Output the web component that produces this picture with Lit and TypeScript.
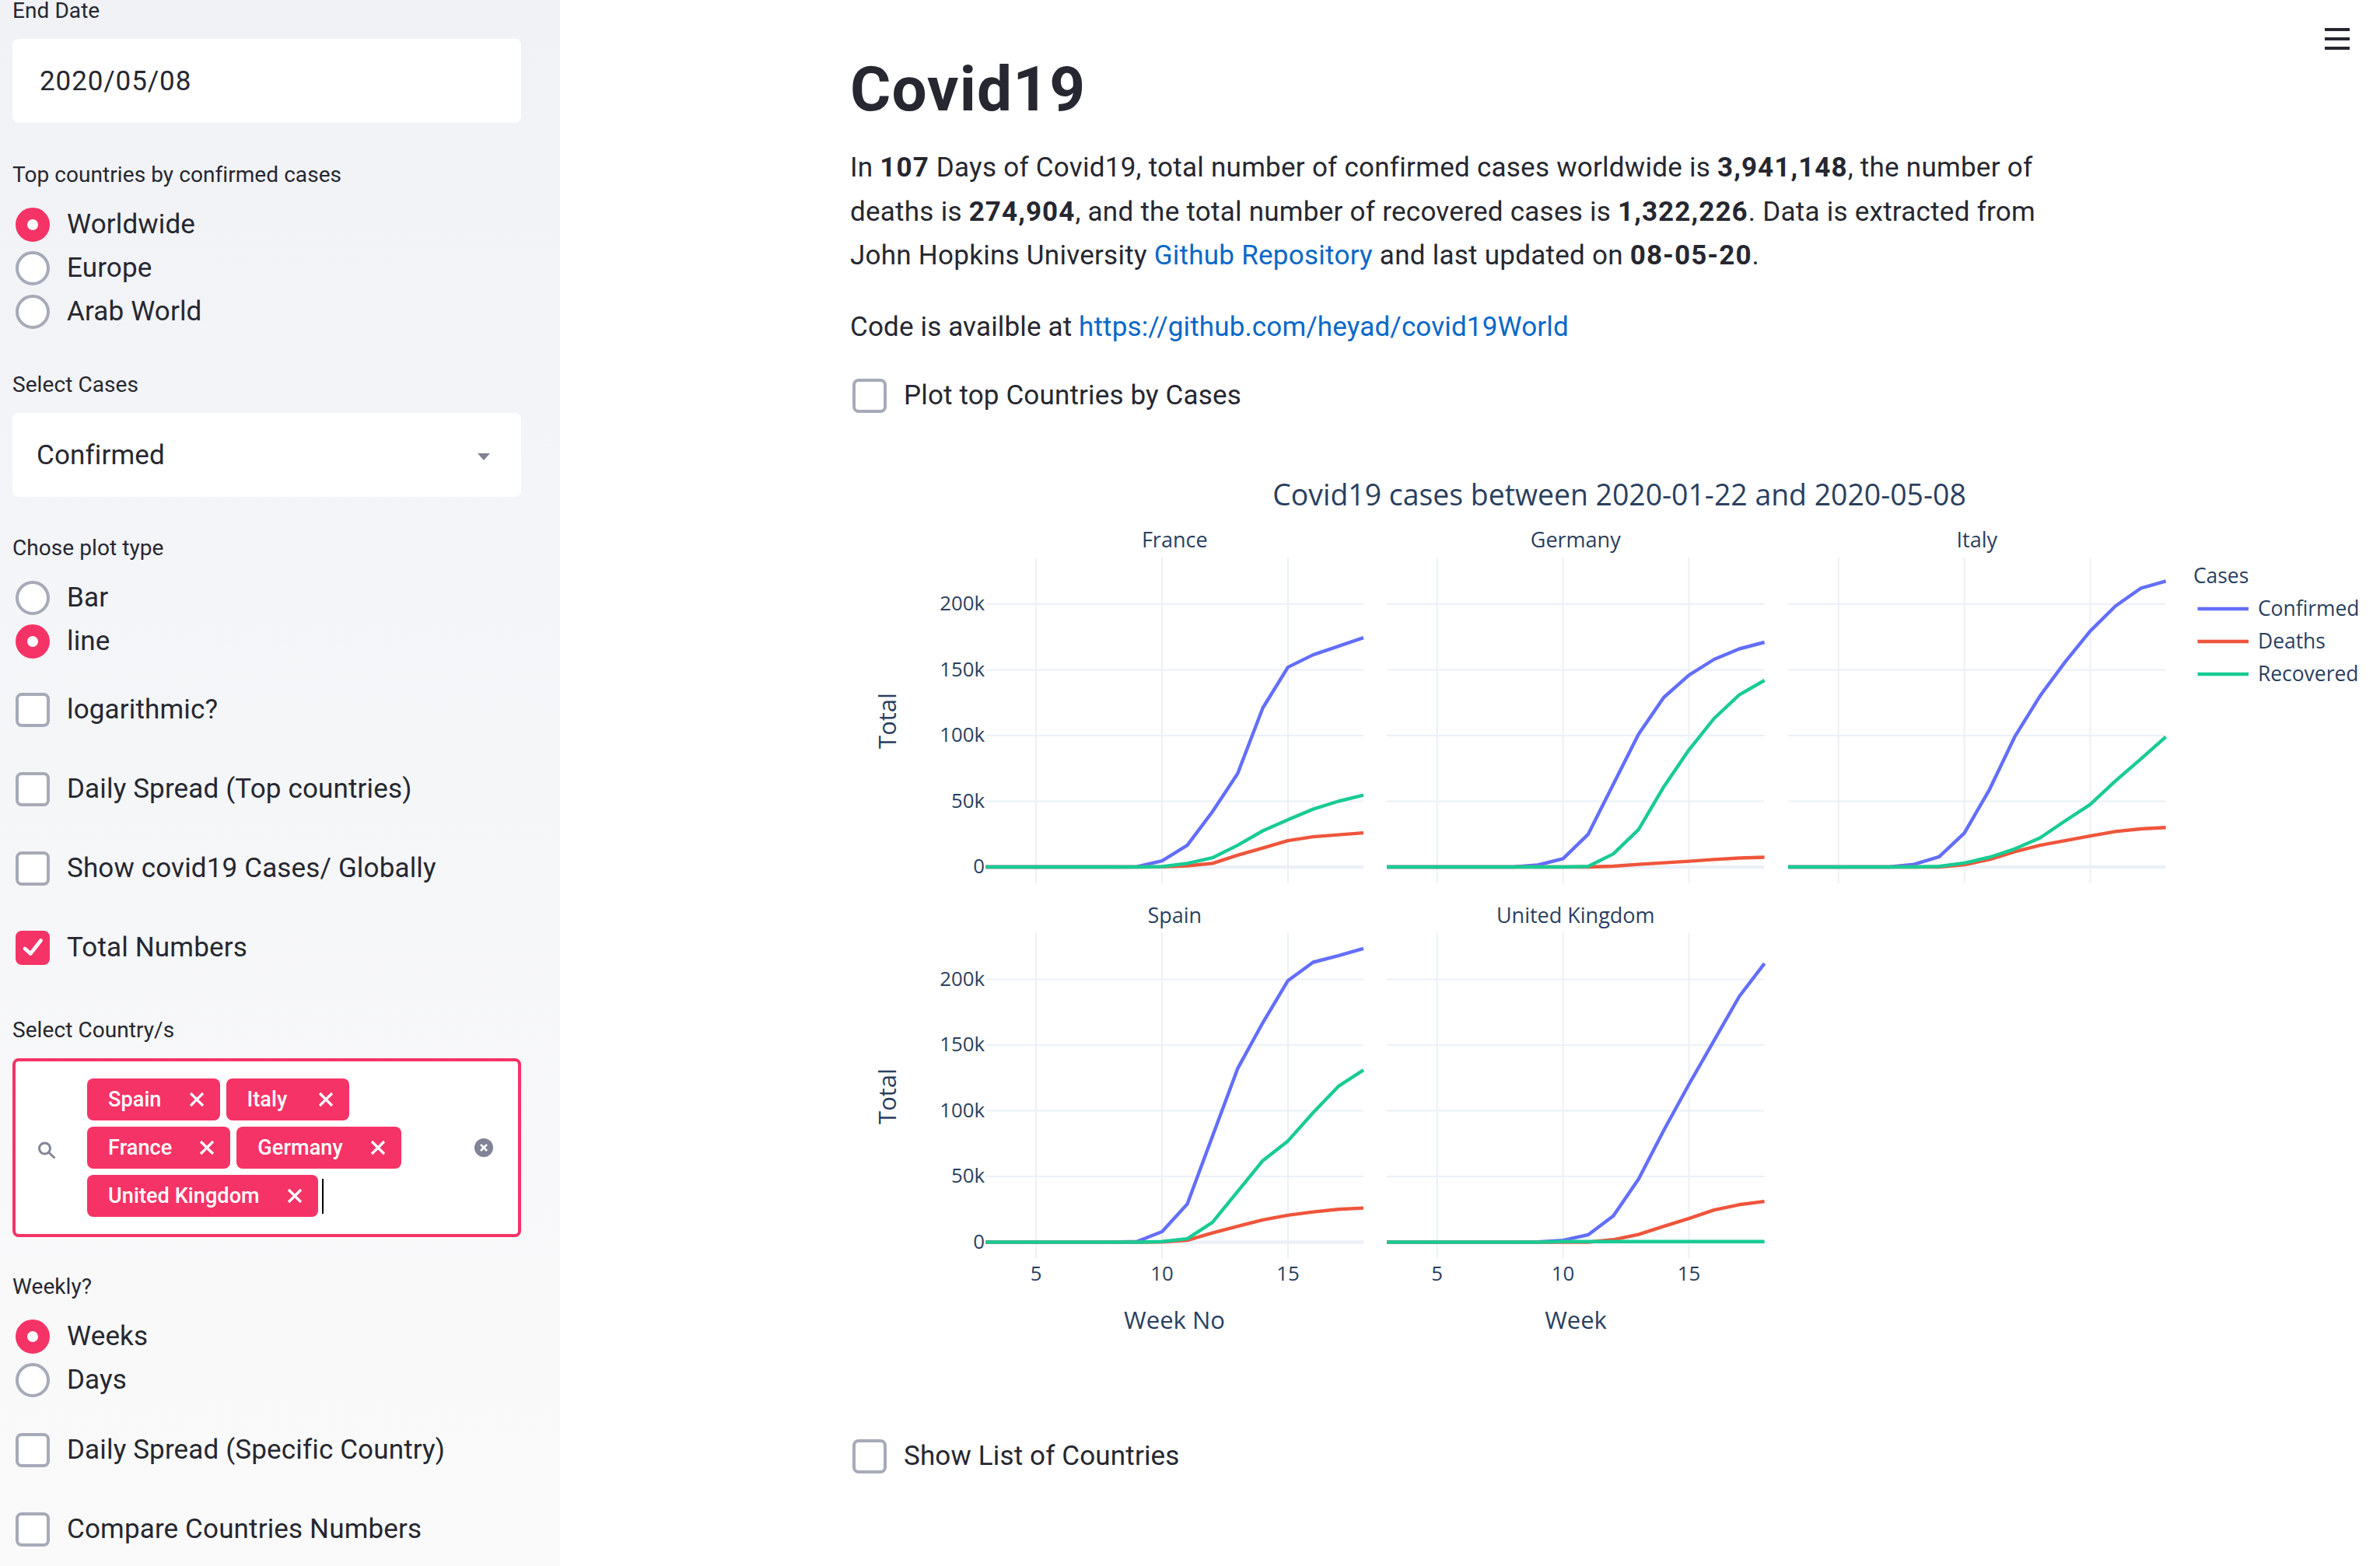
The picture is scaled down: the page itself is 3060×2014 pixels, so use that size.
import { LitElement, html, svg, css } from "lit";
import { customElement } from "lit/decorators.js";

const COLORS = { confirmed: "#636efa", deaths: "#ef553b", recovered: "#19cb94" };
const GRID = "#ebf0f8";

// values in thousands, weeks 8..18 (everything before is flat at zero)
const PANELS = [
  {
    name: "France", x: 1267.5, y: 1114,
    confirmed: [0, 0.2, 4.6, 16.5, 42, 71, 121, 152, 161.5, 168, 174.5],
    deaths: [0, 0, 0.1, 0.9, 2.7, 9, 14.4, 20, 23, 24.5, 26],
    recovered: [0, 0, 0.3, 2.7, 7, 16.5, 27.5, 36, 44, 50, 54.7],
  },
  {
    name: "Germany", x: 1783, y: 1114,
    confirmed: [0, 1.5, 6.3, 25, 63, 101, 129, 146, 158, 166, 171],
    deaths: [0, 0, 0, 0, 0.6, 2, 3.2, 4.4, 5.7, 6.8, 7.4],
    recovered: [0, 0, 0, 0.4, 10, 28.5, 61, 89, 113, 131, 142],
  },
  {
    name: "Italy", x: 2299, y: 1114,
    confirmed: [2, 7.8, 25.8, 59, 99, 130, 156, 179.5, 198.5, 212, 217.5],
    deaths: [0, 0, 1.7, 5.7, 11.6, 16.5, 20, 23.6, 27, 29, 30],
    recovered: [0, 0.4, 3, 7.4, 13.7, 22, 35, 47.5, 65.5, 82, 99],
  },
  {
    name: "Spain", x: 1267.5, y: 1596.5,
    confirmed: [0, 0.5, 8, 29, 80.5, 132, 167, 199, 213, 218, 223.5],
    deaths: [0, 0, 0.2, 1.4, 7, 12, 17, 20.5, 23, 25, 26],
    recovered: [0, 0, 0.5, 2.6, 15, 38.5, 62, 77, 98.5, 118.5, 131],
  },
  {
    name: "United Kingdom", x: 1783, y: 1596.5,
    confirmed: [0, 0.2, 1.4, 5.6, 20, 48, 85, 120, 153.5, 187, 212],
    deaths: [0, 0, 0, 0, 1.9, 5.8, 12, 18, 24.5, 28.5, 31],
    recovered: [0, 0, 0.5, 0.5, 0.5, 0.5, 0.5, 0.5, 0.5, 0.5, 0.5],
  },
];

const WEEK_PX = 32.37;
const K_PX = 1.69;
const PANEL_W = 485.5;

@customElement("covid-chart")
class CovidChart extends LitElement {
  static styles = css`
    :host {
      display: block;
      margin-top: 64px;
    }
    svg {
      display: block;
    }
    text {
      font-family: "Open Sans", sans-serif;
      fill: #2a3f5f;
    }
    .tick {
      font-size: 25.8px;
    }
    .sub {
      font-size: 27px;
      text-anchor: middle;
    }
    .axis {
      font-size: 31px;
      text-anchor: middle;
    }
    .main {
      font-size: 37.4px;
      text-anchor: middle;
    }
    .legend {
      font-size: 26.4px;
    }
  `;

  trace(p: (typeof PANELS)[number], values: number[], color: string) {
    const pts = [`${p.x},${p.y}`, `${p.x + 4 * WEEK_PX},${p.y}`];
    values.forEach((v, i) => {
      pts.push(`${(p.x + (i + 5) * WEEK_PX).toFixed(1)},${(p.y - v * K_PX).toFixed(1)}`);
    });
    return svg`<polyline points=${pts.join(" ")} fill="none" stroke=${color} stroke-width="4.4" stroke-linejoin="round" />`;
  }

  panel(p: (typeof PANELS)[number]) {
    const top = p.y - 398;
    const bottom = p.y + 21;
    return svg`
      ${[5, 10, 15].map((w) => {
        const x = p.x + (w - 3) * WEEK_PX;
        return svg`<line x1=${x} x2=${x} y1=${top} y2=${bottom} stroke=${GRID} stroke-width="2" />`;
      })}
      ${[50, 100, 150, 200].map((k) => {
        const y = p.y - k * K_PX;
        return svg`<line x1=${p.x} x2=${p.x + PANEL_W} y1=${y} y2=${y} stroke=${GRID} stroke-width="2" />`;
      })}
      <line x1=${p.x} x2=${p.x + PANEL_W} y1=${p.y} y2=${p.y} stroke=${GRID} stroke-width="4.4" />
      ${this.trace(p, p.confirmed, COLORS.confirmed)}
      ${this.trace(p, p.deaths, COLORS.deaths)}
      ${this.trace(p, p.recovered, COLORS.recovered)}
      <text class="sub" x=${p.x + PANEL_W / 2} y=${top - 13}>${p.name}</text>
    `;
  }

  yTicks(y0: number) {
    return [
      ["0", 0],
      ["50k", 50],
      ["100k", 100],
      ["150k", 150],
      ["200k", 200],
    ].map(
      ([label, k]) =>
        svg`<text class="tick" x="1266" y=${y0 - (k as number) * K_PX + 8} text-anchor="end">${label}</text>`
    );
  }

  xTicks(x0: number) {
    return [5, 10, 15].map(
      (w) =>
        svg`<text class="tick" x=${x0 + (w - 3) * WEEK_PX} y="1646" text-anchor="middle">${w}</text>`
    );
  }

  render() {
    return html`
      <svg width="1960" height="1160" viewBox="1093 600 1960 1160">
        <text class="main" x="2082" y="649">Covid19 cases between 2020-01-22 and 2020-05-08</text>
        ${PANELS.map((p) => this.panel(p))}
        ${this.yTicks(1114)} ${this.yTicks(1596.5)}
        ${this.xTicks(1267.5)} ${this.xTicks(1783)}
        <text class="axis" transform="translate(1152 926) rotate(-90)">Total</text>
        <text class="axis" transform="translate(1152 1409) rotate(-90)">Total</text>
        <text class="axis" x="1510" y="1708">Week No</text>
        <text class="axis" x="2026" y="1708">Week</text>
        <text class="legend" x="2820" y="749">Cases</text>
        ${[
          ["Confirmed", COLORS.confirmed, 782],
          ["Deaths", COLORS.deaths, 824],
          ["Recovered", COLORS.recovered, 866],
        ].map(
          ([label, color, y]) => svg`
            <line x1="2825.5" x2="2891" y1=${y} y2=${y} stroke=${color} stroke-width="4.4" />
            <text class="legend" x="2903" y=${(y as number) + 9}>${label}</text>
          `
        )}
      </svg>
    `;
  }
}

const xIcon = svg`<svg class="chip-x" width="20" height="20" viewBox="0 0 20 20"><path d="M2 2L18 18M18 2L2 18" stroke="#fff" stroke-width="3.2" fill="none"/></svg>`;

@customElement("app-root")
class AppRoot extends LitElement {
  static styles = css`
    :host {
      display: flex;
      width: 3060px;
      height: 2014px;
      overflow: hidden;
      position: relative;
      background: #fff;
      color: #262730;
      font-family: Roboto, "Noto Sans", sans-serif;
    }
    .sidebar {
      flex: none;
      width: 720px;
      height: 2014px;
      box-sizing: border-box;
      padding-left: 16px;
      background: linear-gradient(180deg, #f0f2f6, #fafafa);
    }
    .label {
      height: 28px;
      line-height: 28px;
      font-size: 28px;
      letter-spacing: 0.07px;
      white-space: nowrap;
    }
    .box {
      width: 654px;
      height: 108px;
      margin-top: 22px;
      box-sizing: border-box;
      background: #fff;
      border-radius: 8px;
      display: flex;
      align-items: center;
      justify-content: space-between;
      font-size: 35px;
      letter-spacing: 0.15px;
    }
    .date {
      padding-left: 35px;
      letter-spacing: 0.9px;
    }
    .select {
      padding: 0 40px 0 31px;
    }
    .caret {
      width: 0;
      height: 0;
      border-left: 8px solid transparent;
      border-right: 8px solid transparent;
      border-top: 9px solid #7f8291;
      margin-top: 4px;
    }
    .opts {
      margin-top: 22px;
    }
    .row {
      display: flex;
      align-items: center;
      gap: 22px;
      height: 56px;
      font-size: 35px;
      letter-spacing: 0.15px;
      white-space: nowrap;
    }
    .txt {
      margin-top: -2px;
    }
    .sidebar .row {
      padding-left: 4px;
    }
    .mark {
      flex: none;
      width: 44px;
      height: 44px;
      box-sizing: border-box;
      background: #fff;
      border: 4px solid #a6aab8;
      display: flex;
      align-items: center;
      justify-content: center;
    }
    .radio {
      border-radius: 50%;
    }
    .check {
      border-radius: 8px;
    }
    .mark.on {
      background: #f63366;
      border-color: #f63366;
    }
    .dot {
      width: 14px;
      height: 14px;
      border-radius: 50%;
      background: #fff;
    }
    .mt32 {
      margin-top: 32px;
    }
    .mt34 {
      margin-top: 34px;
    }
    .mt46 {
      margin-top: 46px;
    }
    .mt50 {
      margin-top: 50px;
    }
    .mt52 {
      margin-top: 52px;
    }
    .mt53 {
      margin-top: 53px;
    }
    .mt64 {
      margin-top: 64px;
    }
    .multi {
      width: 654px;
      height: 230px;
      margin-top: 22px;
      box-sizing: border-box;
      background: #fff;
      border: 4px solid #f63366;
      border-radius: 8px;
      display: flex;
      align-items: center;
      padding: 0 32px 0 29px;
    }
    .search {
      flex: none;
      margin-top: 5px;
    }
    .chips {
      width: 478px;
      margin-left: 41px;
      display: flex;
      flex-wrap: wrap;
      align-items: center;
      gap: 8px;
    }
    .chip {
      height: 54px;
      min-width: 158px;
      box-sizing: border-box;
      padding: 0 20px 0 27px;
      background: #f63366;
      border-radius: 8px;
      color: #fff;
      font-size: 27px;
      font-weight: 500;
      letter-spacing: 0.1px;
      display: flex;
      align-items: center;
      justify-content: space-between;
      gap: 35px;
      white-space: nowrap;
    }
    .text-caret {
      width: 2px;
      height: 45px;
      margin-left: -3px;
      background: #000;
    }
    .clear {
      flex: none;
      margin-left: auto;
    }
    .main {
      flex: 1;
      min-width: 0;
      padding-left: 373px;
    }
    h1 {
      margin: 65px 0 0;
      height: 100px;
      line-height: 100px;
      font-size: 80px;
      font-weight: 700;
      letter-spacing: 1.1px;
      white-space: nowrap;
    }
    p {
      margin: 23px 0 0;
      font-size: 35px;
      letter-spacing: 0.26px;
      line-height: 56.5px;
      white-space: nowrap;
    }
    b {
      letter-spacing: 1.1px;
    }
    p.code {
      margin-top: 35px;
      letter-spacing: 0.15px;
    }
    a {
      color: #0a68c8;
      text-decoration: none;
    }
    .main .row {
      padding-left: 3px;
    }
    .plot-toggle {
      margin-top: 32px;
    }
    .list-toggle {
      margin-top: 84px;
    }
    .burger {
      position: absolute;
      top: 36px;
      right: 39px;
      width: 32px;
      height: 28px;
      display: flex;
      flex-direction: column;
      justify-content: space-between;
    }
    .burger i {
      display: block;
      height: 4px;
      background: #262730;
    }
  `;

  radio(label: string, on = false) {
    return html`<div class="row">
      <span class="mark radio ${on ? "on" : ""}">${on ? html`<span class="dot"></span>` : ""}</span>
      <span class="txt">${label}</span>
    </div>`;
  }

  check(label: string, extra = "", on = false) {
    return html`<div class="row ${extra}">
      <span class="mark check ${on ? "on" : ""}">
        ${on
          ? html`<svg width="26" height="26" viewBox="0 0 26 26"><path d="M3 14L10.3 20.5L23.5 3.5" stroke="#fff" stroke-width="4.6" stroke-linecap="round" stroke-linejoin="round" fill="none"/></svg>`
          : ""}
      </span>
      <span class="txt">${label}</span>
    </div>`;
  }

  render() {
    return html`
      <aside class="sidebar">
        <div class="label">End Date</div>
        <div class="box date">2020/05/08</div>
        <div class="label mt53">Top countries by confirmed cases</div>
        <div class="opts">
          ${this.radio("Worldwide", true)} ${this.radio("Europe")} ${this.radio("Arab World")}
        </div>
        <div class="label mt52">Select Cases</div>
        <div class="box select">Confirmed<span class="caret"></span></div>
        <div class="label mt52">Chose plot type</div>
        <div class="opts">${this.radio("Bar")} ${this.radio("line", true)}</div>
        ${this.check("logarithmic?", "mt32")}
        ${this.check("Daily Spread (Top countries)", "mt46")}
        ${this.check("Show covid19 Cases/ Globally", "mt46")}
        ${this.check("Total Numbers", "mt46", true)}
        <div class="label mt64">Select Country/s</div>
        <div class="multi">
          <svg class="search" width="22" height="22" viewBox="0 0 22 22" fill="none" stroke="#808495" stroke-width="3" stroke-linecap="round">
            <circle cx="8.5" cy="9" r="7" />
            <path d="M13.5 14L20.5 20.5" />
          </svg>
          <div class="chips">
            ${["Spain", "Italy", "France", "Germany", "United Kingdom"].map(
              (c) => html`<span class="chip">${c}${xIcon}</span>`
            )}
            <span class="text-caret"></span>
          </div>
          <svg class="clear" width="24" height="24" viewBox="0 0 24 24">
            <circle cx="12" cy="12" r="12" fill="#808495" />
            <path d="M8 8L16 16M16 8L8 16" stroke="#fff" stroke-width="2.6" />
          </svg>
        </div>
        <div class="label mt50">Weekly?</div>
        <div class="opts">${this.radio("Weeks", true)} ${this.radio("Days")}</div>
        ${this.check("Daily Spread (Specific Country)", "mt34")}
        ${this.check("Compare Countries Numbers", "mt46")}
      </aside>
      <main class="main">
        <h1>Covid19</h1>
        <p>
          In <b>107</b> Days of Covid19, total number of confirmed cases worldwide is <b>3,941,148</b>, the number of<br />
          deaths is <b>274,904</b>, and the total number of recovered cases is <b>1,322,226</b>. Data is extracted from<br />
          John Hopkins University <a href="#">Github Repository</a> and last updated on <b>08-05-20</b>.
        </p>
        <p class="code">Code is availble at <a href="#">https://github.com/heyad/covid19World</a></p>
        ${this.check("Plot top Countries by Cases", "plot-toggle")}
        <covid-chart></covid-chart>
        ${this.check("Show List of Countries", "list-toggle")}
      </main>
      <div class="burger"><i></i><i></i><i></i></div>
    `;
  }
}
